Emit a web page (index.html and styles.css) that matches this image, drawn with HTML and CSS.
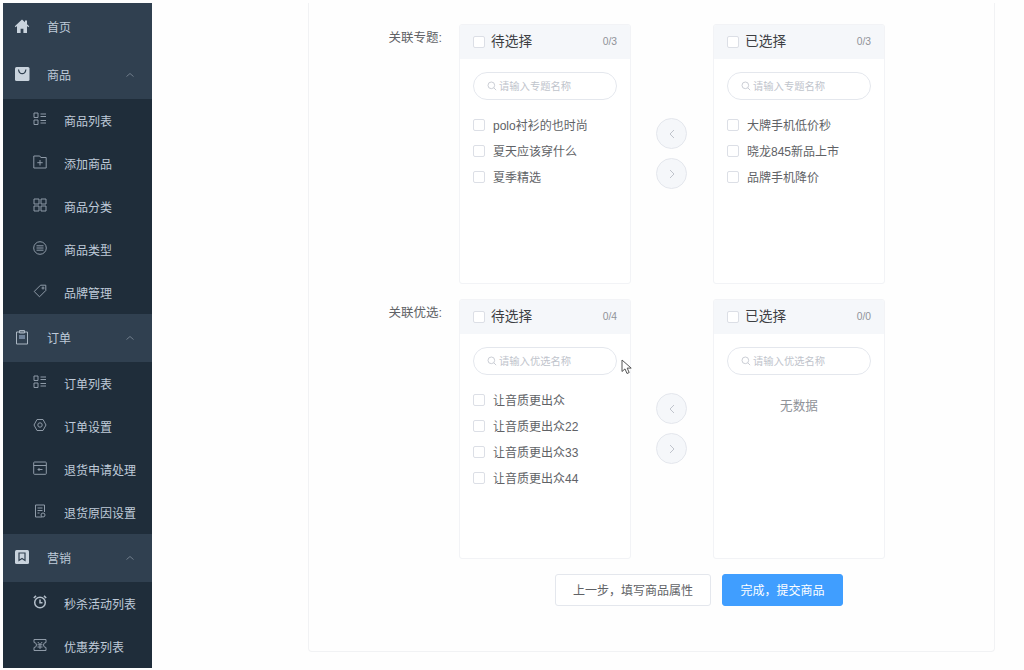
FILE: index.html
```html
<!DOCTYPE html>
<html lang="zh-CN">

<head>
    <meta charset="UTF-8">
    <meta name="viewport" content="width=device-width, initial-scale=1.0">
    <title>添加商品</title>
    <link rel="stylesheet" href="styles.css">
</head>

<body>

    <!-- Sidebar menu -->
    <nav class="sidebar">
        <div class="menu-head">
            <svg class="head-icon" viewBox="0 0 16 16"><path class="fill" d="M8 1.500 .8 8.200l.9 1L3 8.100V15h3.600v-4.200h2.800V15H13V8.100l1.300 1.100.9-1-2.200-2V2.400h-2v1.900z"/></svg>
            <span>首页</span>
        </div>

        <div class="menu-head">
            <svg class="head-icon" viewBox="0 0 16 16"><rect class="fill" x="1" y="1" width="14.500" height="14" rx="1.500"/><path class="cut" d="M4.500 3.500c.4 3 2 4.200 3.700 4.200s3.300-1.200 3.700-4.200"/></svg>
            <span>商品</span>
            <svg class="chevron" viewBox="0 0 8 4"><path d="M.5 3.500 4 .5l3.500 3"/></svg>
        </div>
        <div class="menu-item">
            <svg class="sub-icon" viewBox="0 0 14 14"><path d="M1 1h4v4.500H1zM1 8h4v4.500H1zM7.500 2H13M7.500 4.500H13M7.500 8.500H13M7.500 11H13"/></svg>
            <span>商品列表</span>
        </div>
        <div class="menu-item">
            <svg class="sub-icon" viewBox="0 0 14 14"><path d="M.8 1h6l1 1.500h5.400v10.500H.8zM7 5v5.500M4.300 7.700h5.400"/></svg>
            <span>添加商品</span>
        </div>
        <div class="menu-item">
            <svg class="sub-icon" viewBox="0 0 14 14"><path d="M1 1h5v5H1zM8 1h5v5H8zM1 8h5v5H1zM8 8h5v5H8z"/></svg>
            <span>商品分类</span>
        </div>
        <div class="menu-item">
            <svg class="sub-icon" viewBox="0 0 14 14"><circle cx="7" cy="7" r="6.300"/><path d="M3.500 4.800h7M3.500 7h7M3.500 9.200h7"/></svg>
            <span>商品类型</span>
        </div>
        <div class="menu-item">
            <svg class="sub-icon" viewBox="0 0 14 14"><path d="M7.500 1.200h5.300v5.300L6.500 12.800 1.200 7.500z"/><circle cx="10" cy="4" r="1"/></svg>
            <span>品牌管理</span>
        </div>

        <div class="menu-head">
            <svg class="head-icon" viewBox="0 0 16 16"><path d="M2.500 3h11v12h-11zM5.500 1.500h5V4h-5z"/><path class="inner" d="M5 6h6v4H5z"/></svg>
            <span>订单</span>
            <svg class="chevron" viewBox="0 0 8 4"><path d="M.5 3.500 4 .5l3.500 3"/></svg>
        </div>
        <div class="menu-item">
            <svg class="sub-icon" viewBox="0 0 14 14"><path d="M1 1h4v4.500H1zM1 8h4v4.500H1zM7.500 2H13M7.500 4.500H13M7.500 8.500H13M7.500 11H13"/></svg>
            <span>订单列表</span>
        </div>
        <div class="menu-item">
            <svg class="sub-icon" viewBox="0 0 14 14"><path d="M4 1.500h6L13 7l-3 5.500H4L1 7z"/><circle cx="7" cy="7" r="2.200"/></svg>
            <span>订单设置</span>
        </div>
        <div class="menu-item">
            <svg class="sub-icon" viewBox="0 0 14 14"><path d="M1.500 1h11a.8.8 0 0 1 .8.800v10.700a.8.8 0 0 1-.8.800h-11a.8.8 0 0 1-.8-.8V1.800a.8.8 0 0 1 .8-.8zM.8 4.500h12.400M9.500 8.500H5M6.500 7 5 8.500 6.500 10"/></svg>
            <span>退货申请处理</span>
        </div>
        <div class="menu-item">
            <svg class="sub-icon" viewBox="0 0 14 14"><path d="M9 13H2.500V1h9v7M4.500 4h5M4.500 6.500h5M4.500 9h2"/><circle cx="10" cy="11" r="2"/></svg>
            <span>退货原因设置</span>
        </div>

        <div class="menu-head">
            <svg class="head-icon" viewBox="0 0 16 16"><rect class="fill" x="1" y="1" width="14" height="14" rx="1.500"/><path class="cut" d="M5 4h6v7.500L8 9.500l-3 2z"/></svg>
            <span>营销</span>
            <svg class="chevron" viewBox="0 0 8 4"><path d="M.5 3.500 4 .5l3.500 3"/></svg>
        </div>
        <div class="menu-item">
            <svg class="sub-icon" viewBox="0 0 14 14"><circle class="thick" cx="7" cy="7.500" r="5.300"/><path class="thick" d="M7 4.500v3.200h2.500M.8 3 3 .9M13.200 3 11 .9"/></svg>
            <span>秒杀活动列表</span>
        </div>
        <div class="menu-item">
            <svg class="sub-icon" viewBox="0 0 14 14"><path d="M1 1.500h12v3a2.500 2.500 0 0 0 0 5v3H1v-3a2.500 2.500 0 0 0 0-5zM4.800 4 7 6.500 9.200 4M4.500 6.800h5M4.500 9h5M7 6.500V11"/></svg>
            <span>优惠券列表</span>
        </div>
    </nav>

    <main class="content">
        <div class="card">

            <div class="form-row">
                <label class="form-label">关联专题:</label>
                <div class="transfer">
                    <div class="panel">
                        <div class="panel-head">
                            <span class="check"></span>
                            <span class="panel-title">待选择</span>
                            <span class="count">0/3</span>
                        </div>
                        <div class="panel-body">
                            <div class="search">
                                <svg viewBox="0 0 12 12"><circle cx="5.200" cy="5.200" r="4"/><path d="m8.200 8.200 2.800 2.800"/></svg>
                                <span>请输入专题名称</span>
                            </div>
                            <div class="option"><span class="check"></span>polo衬衫的也时尚</div>
                            <div class="option"><span class="check"></span>夏天应该穿什么</div>
                            <div class="option"><span class="check"></span>夏季精选</div>
                        </div>
                    </div>
                    <div class="arrows">
                        <span class="arrow"><svg viewBox="0 0 6 10"><path d="M5 1 1 5l4 4"/></svg></span>
                        <span class="arrow"><svg viewBox="0 0 6 10"><path d="m1 1 4 4-4 4"/></svg></span>
                    </div>
                    <div class="panel">
                        <div class="panel-head">
                            <span class="check"></span>
                            <span class="panel-title">已选择</span>
                            <span class="count">0/3</span>
                        </div>
                        <div class="panel-body">
                            <div class="search">
                                <svg viewBox="0 0 12 12"><circle cx="5.200" cy="5.200" r="4"/><path d="m8.200 8.200 2.800 2.800"/></svg>
                                <span>请输入专题名称</span>
                            </div>
                            <div class="option"><span class="check"></span>大牌手机低价秒</div>
                            <div class="option"><span class="check"></span>晓龙845新品上市</div>
                            <div class="option"><span class="check"></span>品牌手机降价</div>
                        </div>
                    </div>
                </div>
            </div>

            <div class="form-row">
                <label class="form-label">关联优选:</label>
                <div class="transfer">
                    <div class="panel">
                        <div class="panel-head">
                            <span class="check"></span>
                            <span class="panel-title">待选择</span>
                            <span class="count">0/4</span>
                        </div>
                        <div class="panel-body">
                            <div class="search">
                                <svg viewBox="0 0 12 12"><circle cx="5.200" cy="5.200" r="4"/><path d="m8.200 8.200 2.800 2.800"/></svg>
                                <span>请输入优选名称</span>
                            </div>
                            <div class="option"><span class="check"></span>让音质更出众</div>
                            <div class="option"><span class="check"></span>让音质更出众22</div>
                            <div class="option"><span class="check"></span>让音质更出众33</div>
                            <div class="option"><span class="check"></span>让音质更出众44</div>
                        </div>
                    </div>
                    <div class="arrows">
                        <span class="arrow"><svg viewBox="0 0 6 10"><path d="M5 1 1 5l4 4"/></svg></span>
                        <span class="arrow"><svg viewBox="0 0 6 10"><path d="m1 1 4 4-4 4"/></svg></span>
                    </div>
                    <div class="panel">
                        <div class="panel-head">
                            <span class="check"></span>
                            <span class="panel-title">已选择</span>
                            <span class="count">0/0</span>
                        </div>
                        <div class="panel-body">
                            <div class="search">
                                <svg viewBox="0 0 12 12"><circle cx="5.200" cy="5.200" r="4"/><path d="m8.200 8.200 2.800 2.800"/></svg>
                                <span>请输入优选名称</span>
                            </div>
                            <div class="empty">无数据</div>
                        </div>
                    </div>
                </div>
            </div>

            <div class="actions">
                <button class="btn">上一步，填写商品属性</button>
                <button class="btn btn-primary">完成，提交商品</button>
            </div>
        </div>
    </main>

    <!-- Mouse pointer caught in the screenshot -->
    <svg class="cursor" viewBox="0 0 11 16"><path d="M1 1v11.500l3-2.600 2 4.600 2.200-1-2-4.400h4z"/></svg>

</body>

</html>
```

FILE: styles.css
```css
body {
    margin: 0;
    height: 670px;
    overflow: hidden;
    display: flex;
    background-color: #fefefe;
    font-family: "Liberation Sans", "Noto Sans CJK SC", sans-serif;
    font-size: 12px;
    color: #606266;
}

/* sidebar */
.sidebar {
    width: 149px;
    height: 665px;
    margin: 3px 0 2px 3px;
    flex-shrink: 0;
    overflow: hidden;
    background-color: #1f2d3a;
    color: #bfcbd9;
}

.menu-head,
.menu-item {
    display: flex;
    align-items: center;
}

.menu-head {
    height: 48px;
    padding-left: 11px;
    background-color: #304050;
}

.menu-head span {
    padding-bottom: 2px;
}

.menu-item {
    height: 43px;
    padding-left: 30px;
}

.sidebar svg {
    fill: none;
    stroke: #aab6c2;
    stroke-width: 1;
}

.sidebar .head-icon {
    width: 16px;
    height: 16px;
    margin-right: 17px;
    flex-shrink: 0;
    position: relative;
    top: -1px;
}

.sidebar .sub-icon {
    width: 14px;
    height: 14px;
    margin-right: 17px;
    flex-shrink: 0;
    position: relative;
    top: -2px;
    stroke: #8f9ba8;
}

.sidebar .fill {
    fill: #c9d3dd;
    stroke: none;
}

.sidebar .inner {
    fill: #6f8299;
    stroke: none;
}

.sidebar .cut {
    stroke: #304050;
    stroke-width: 1.200;
}

.sidebar .thick {
    stroke: #b4bfca;
    stroke-width: 1.500;
}

.sidebar .chevron {
    width: 8px;
    height: 4px;
    margin-left: auto;
    margin-right: 18px;
    stroke: #6f7c8a;
}

/* main card */
.content {
    flex: 1;
    padding: 3px 30px 0 156px;
}

.card {
    width: 685px;
    height: 648px;
    border: 1px solid #f1f2f4;
    border-top: none;
    border-radius: 0 0 4px 4px;
}

.form-row {
    display: flex;
    padding-top: 21px;
    margin-bottom: -6px;
}

.form-label {
    width: 133px;
    padding-top: 7px;
    box-sizing: border-box;
    text-align: right;
    line-height: 14px;
    font-size: 12.500px;
}

.transfer {
    display: flex;
    margin-left: 17px;
}

.panel {
    width: 172px;
    height: 260px;
    box-sizing: border-box;
    border: 1px solid #f2f3f6;
    border-radius: 3px;
    overflow: hidden;
    background-color: #fff;
}

.panel-head {
    height: 34px;
    box-sizing: border-box;
    display: flex;
    align-items: center;
    padding: 0 13px 1px;
    background-color: #f5f7fa;
}

.panel-title {
    margin-left: 6px;
    padding-bottom: 3px;
    font-size: 13.700px;
    color: #3c3e42;
}

.count {
    margin-left: auto;
    font-size: 10.300px;
    color: #909399;
}

.panel-body {
    padding: 13px 13px 0;
}

.check {
    width: 12px;
    height: 12px;
    box-sizing: border-box;
    flex-shrink: 0;
    border: 1px solid #dcdfe6;
    border-radius: 2px;
    background-color: #fff;
}

.search {
    height: 28px;
    box-sizing: border-box;
    display: flex;
    align-items: center;
    padding-left: 13px;
    margin-bottom: 12px;
    border: 1px solid #e4e7ed;
    border-radius: 14px;
    font-size: 10.300px;
    color: #c0c4cc;
}

.search span {
    padding-bottom: 2px;
}

.search svg {
    width: 10px;
    height: 10px;
    margin-right: 2px;
    fill: none;
    stroke: #c0c4cc;
}

.option {
    height: 26px;
    box-sizing: border-box;
    display: flex;
    align-items: center;
    gap: 8px;
    padding-bottom: 2px;
}

.option .check {
    margin-top: 2px;
}

.empty {
    padding-top: 12px;
    text-align: center;
    line-height: 14px;
    font-size: 12.600px;
    color: #909399;
}

.arrows {
    width: 82px;
    box-sizing: border-box;
    display: flex;
    flex-direction: column;
    align-items: center;
    justify-content: center;
    gap: 9px;
    padding: 0 1px 1px 0;
}

.arrow {
    width: 31px;
    height: 31px;
    box-sizing: border-box;
    display: flex;
    align-items: center;
    justify-content: center;
    border: 1px solid #e4e7ed;
    border-radius: 50%;
    background-color: #f5f7fa;
}

.arrow svg {
    width: 6px;
    height: 10px;
    fill: none;
    stroke: #c0c4cc;
}

.actions {
    display: flex;
    gap: 11px;
    padding: 21px 0 0 246px;
}

.btn {
    height: 32px;
    width: 156px;
    padding: 0 0 2px;
    border: 1px solid #e4e7ed;
    border-radius: 3px;
    background-color: #fff;
    font-family: inherit;
    font-size: 12px;
    color: #606266;
}

.btn-primary {
    width: 121px;
    border-color: #409eff;
    background-color: #409eff;
    color: #fff;
}

.cursor {
    position: absolute;
    left: 621px;
    top: 359px;
    width: 11px;
    height: 16px;
    fill: #fff;
    stroke: #555;
    stroke-width: 1;
}
```
